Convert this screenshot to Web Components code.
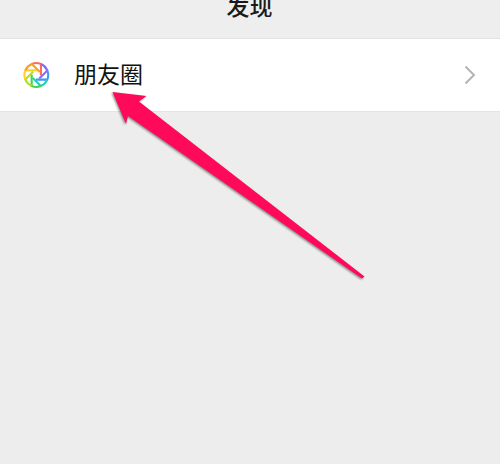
<!DOCTYPE html>
<html lang="zh">
<head>
<meta charset="utf-8">
<title>发现</title>
<style>
  html, body { margin: 0; padding: 0; height: 100%; overflow: hidden; }
  body { background: #ededed; font-family: "Noto Sans CJK SC", "Noto Sans", sans-serif; }
</style>
</head>
<body>
<discover-page>
  <nav-title slot="header">发现</nav-title>
  <list-row>
    <moments-icon slot="icon"></moments-icon>
    朋友圈
  </list-row>
  <arrow-mark slot="overlay"></arrow-mark>
</discover-page>

<script>
class DiscoverPage extends HTMLElement {
  constructor() {
    super();
    this.root = this.attachShadow({ mode: "open" });
    this.root.innerHTML = `
      <style>
        :host {
          display: block;
          position: relative;
          width: 500px;
          height: 464px;
          overflow: hidden;
          background: #ededed;
        }
      </style>
      <slot name="header"></slot>
      <slot></slot>
      <slot name="overlay"></slot>
    `;
  }
}

class NavTitle extends HTMLElement {
  constructor() {
    super();
    this.root = this.attachShadow({ mode: "open" });
    this.root.innerHTML = `
      <style>
        :host {
          display: flex;
          justify-content: center;
          align-items: flex-end;
          box-sizing: border-box;
          height: 39px;
          padding: 0 1px 17px 0;
          overflow: hidden;
          background: #eeeeee;
          border-bottom: 1px solid #e2e2e2;
          color: #1a1a1a;
          font-size: 23px;
          font-weight: 500;
          line-height: 32px;
        }
      </style>
      <slot></slot>
    `;
  }
}

class ListRow extends HTMLElement {
  constructor() {
    super();
    this.root = this.attachShadow({ mode: "open" });
    this.root.innerHTML = `
      <style>
        :host {
          display: flex;
          align-items: center;
          box-sizing: border-box;
          height: 73px;
          padding: 0 23px 1px 23px;
          background: #fff;
          border-bottom: 1px solid #e4e4e4;
          color: #111;
          font-size: 23px;
        }
        .label { flex: 1; margin-left: 25px; padding-bottom: 4px; }
        svg { display: block; }
      </style>
      <slot name="icon"></slot>
      <span class="label"><slot></slot></span>
      <svg width="14" height="20" viewBox="0 0 14 20">
        <path d="M2.5 1.5 L11 10 L2.5 18.5" fill="none" stroke="#b4b4b4" stroke-width="2"/>
      </svg>
    `;
  }
}

class MomentsIcon extends HTMLElement {
  constructor() {
    super();
    this.root = this.attachShadow({ mode: "open" });
    // clockwise from the top blade
    const colors = ["#fb6d55", "#8a6cf0", "#3f98f6", "#25cfb4", "#3fd748", "#aee024", "#fdd31f", "#fa9e22"];
    const pt = (r, t) => `${(13.3 + r * Math.cos(t)).toFixed(2)} ${(13 + r * Math.sin(t)).toFixed(2)}`;
    let blades = "";
    colors.forEach((color, i) => {
      const a = (i * 45 - 112) * Math.PI / 180;
      const b = a + 45 * Math.PI / 180;
      // outer arc, then a spoke that runs tangent to the centre hole
      blades += `<path d="M${pt(11.9, a)} A11.9 11.9 0 0 1 ${pt(11.9, b)} L${pt(4.6, b + 1.25)}"
        fill="none" stroke="${color}" stroke-width="2.1"/>`;
    });
    this.root.innerHTML = `
      <style>
        :host { display: block; width: 27px; height: 26px; margin-right: -1px; }
        svg { display: block; }
      </style>
      <svg width="27" height="26" viewBox="0 0 27 26">${blades}</svg>
    `;
  }
}

class ArrowMark extends HTMLElement {
  constructor() {
    super();
    this.root = this.attachShadow({ mode: "open" });
    this.root.innerHTML = `
      <style>
        :host { position: absolute; inset: 0; display: block; pointer-events: none; }
        svg { display: block; filter: drop-shadow(-1px 1px 1px rgba(0, 0, 0, 0.45)); }
      </style>
      <svg width="500" height="464" viewBox="0 0 500 464">
        <polygon fill="#ff0a5a"
          points="112.5,92 146.5,96 139,101.5 364.5,276.5 362,278.5 128,116 126,124"/>
      </svg>
    `;
  }
}

customElements.define("discover-page", DiscoverPage);
customElements.define("nav-title", NavTitle);
customElements.define("list-row", ListRow);
customElements.define("moments-icon", MomentsIcon);
customElements.define("arrow-mark", ArrowMark);
</script>
</body>
</html>
